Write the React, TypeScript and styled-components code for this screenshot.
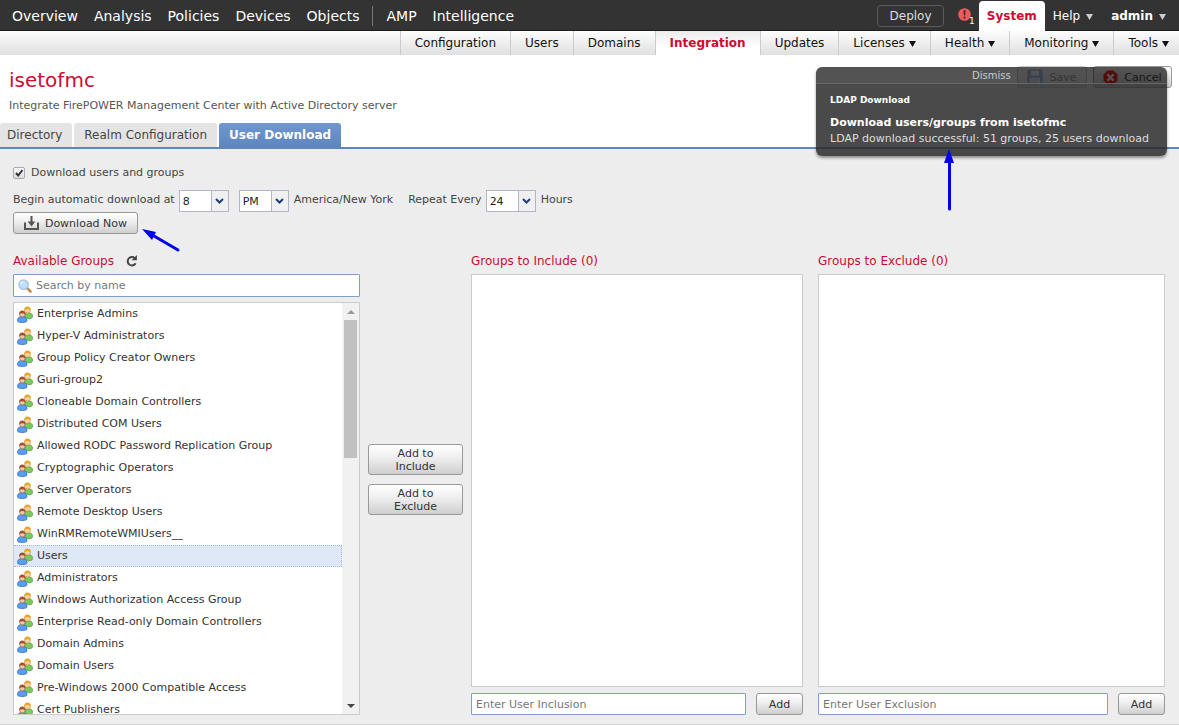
import React from 'react';
import styled, { createGlobalStyle, css } from 'styled-components';

const Global = createGlobalStyle`
  * { box-sizing: border-box; }
  body {
    margin: 0;
    background: #fff;
    color: #444;
    font: 11px/14px "DejaVu Sans", Verdana, sans-serif;
  }
  button, input, select { font: inherit; color: inherit; margin: 0; }
  h1, h2, h3, p, ul { margin: 0; padding: 0; font-weight: normal; }
  a { color: inherit; text-decoration: none; }
`;

const red = '#cc0c33';
const fieldBorder = '#7f9fc6';

const Page = styled.div`
  position: relative;
  display: flex;
  flex-direction: column;
`;

/* ---------- top bar ---------- */
const TopBar = styled.header`
  display: flex;
  justify-content: space-between;
  height: 31px;
  background: #333;
  border-bottom: 1px solid #1c1c1c;
  color: #fff;
`;
const MainNav = styled.nav`
  display: flex;
  align-items: center;
  gap: 16px;
  padding: 1px 0 0 12px;
  font-size: 14px;
  line-height: 20px;
`;
const NavDivider = styled.span`
  width: 1px;
  height: 20px;
  margin: 0 -3px;
  background: #777;
`;
const UserNav = styled.nav`
  display: flex;
  align-items: center;
  padding-right: 13px;
  font-size: 12px;
  line-height: 18px;
`;
const DeployButton = styled.button`
  width: 67px;
  height: 22px;
  margin-top: 1px;
  padding: 0;
  border: 1px solid #5c5c5c;
  border-radius: 4px;
  background: transparent;
  color: #ddd;
`;
const AlertLink = styled.a`
  display: flex;
  margin: 5px 4px 0 14px;
  color: #fff;
  font-size: 9px;
  line-height: 12px;
`;
const AlertCount = styled.span`
  padding-top: 7px;
  margin-left: -2px;
`;
const SystemTab = styled.a`
  align-self: flex-end;
  height: 30px;
  padding: 6px 8px;
  margin: 0 8px -1px 0;
  border-radius: 4px 4px 0 0;
  background: #fff;
  color: ${red};
  font-weight: bold;
`;
const MenuLink = styled.a<{ $bold?: boolean }>`
  display: flex;
  align-items: center;
  gap: 6px;
  padding-top: 1px;
  font-weight: ${(p) => (p.$bold ? 'bold' : 'normal')};
  svg { margin-top: 2px; }
  & + & { margin-left: 18px; }
`;

/* ---------- second bar ---------- */
const SubNav = styled.nav`
  display: flex;
  justify-content: flex-end;
  height: 24px;
  background: linear-gradient(#fdfdfd, #e0e0e0);
  color: #111;
  font-size: 12px;
  line-height: 24px;
`;
const SubLink = styled.a<{ $active?: boolean }>`
  display: flex;
  align-items: center;
  gap: 4px;
  padding: 0 14px;
  border-left: 1px solid #ccc;
  svg { margin-top: 2px; }
  &:last-child { padding-right: 10px; }
  ${(p) => p.$active && css`
    background: linear-gradient(#ececec, #fff 70%);
    color: ${red};
    font-weight: bold;
  `}
`;

/* ---------- page header ---------- */
const PageHeader = styled.div`
  display: flex;
  justify-content: space-between;
  padding: 11px 7px 0 9px;
`;
const Title = styled.h1`
  color: ${red};
  font-size: 20px;
  line-height: 28px;
`;
const Description = styled.p`
  padding-top: 5px;
  color: #555;
`;
const HeaderActions = styled.div`
  display: flex;
  align-items: flex-start;
  gap: 6px;
`;
const Button = styled.button<{ $width?: number }>`
  display: flex;
  align-items: center;
  justify-content: center;
  gap: 6px;
  width: ${(p) => (p.$width ? `${p.$width}px` : 'auto')};
  min-height: 22px;
  flex: none;
  padding: 0 8px;
  border: 1px solid #999;
  border-radius: 3px;
  background: linear-gradient(#fff, #f0f0f0 40%, #cfcfcf);
  color: #333;
  line-height: 13px;
  &:disabled { opacity: 0.5; }
`;

const Tabs = styled.nav`
  display: flex;
  gap: 2px;
  margin-top: 10px;
  border-bottom: 2px solid #5f86be;
  font-size: 12px;
  line-height: 24px;
`;
const Tab = styled.a<{ $active?: boolean }>`
  padding: 0 10px;
  border-radius: 3px 3px 0 0;
  background: #e4e4e4;
  color: #444;
  &:first-child { padding-left: 7px; }
  ${(p) => p.$active && css`
    background: linear-gradient(#6f97d0, #5f86be);
    color: #fff;
    font-weight: bold;
  `}
`;

/* ---------- form ---------- */
const Content = styled.main`
  padding: 15px 14px 9px 13px;
  background: #ededed;
  border-bottom: 1px solid #d5d5d5;
`;
const CheckLabel = styled.label`
  display: flex;
  align-items: center;
  gap: 6px;
  height: 18px;
`;
const CheckBox = styled.input`
  appearance: none;
  width: 12px;
  height: 12px;
  border: 1px solid #aaa;
  border-radius: 2px;
  background: linear-gradient(#fafafa, #ddd);
  & + svg { visibility: hidden; }
  &:checked + svg { visibility: visible; }
`;
const CheckWrap = styled.span`
  position: relative;
  display: flex;
  svg { position: absolute; inset: 0; pointer-events: none; }
`;
const ScheduleRow = styled.div`
  display: flex;
  align-items: flex-start;
  height: 22px;
  margin-top: 8px;
`;
const ScheduleLabel = styled.label`
  padding: 3px 0;
  white-space: nowrap;
`;
const RepeatLabel = styled(ScheduleLabel)`
  margin-left: 15px;
`;
const SelectWrap = styled.span<{ $before: number; $after: number }>`
  position: relative;
  display: flex;
  margin: 0 ${(p) => p.$after}px 0 ${(p) => p.$before}px;
`;
const Select = styled.select`
  appearance: none;
  width: 50px;
  height: 22px;
  padding: 2px 20px 0 3px;
  border: 1px solid #b0b6c8;
  border-radius: 0;
  background: #fff;
  color: #222;
`;
const SelectArrow = styled.span`
  position: absolute;
  top: 1px;
  right: 1px;
  display: flex;
  align-items: center;
  justify-content: center;
  width: 17px;
  height: 20px;
  border-left: 1px solid #b0b6c8;
  background: #f0f0f0;
  pointer-events: none;
`;

/* ---------- group columns ---------- */
const Columns = styled.div`
  display: grid;
  grid-template-columns: minmax(0, 347fr) 95px minmax(0, 332fr) minmax(0, 354fr);
  column-gap: 8px;
  margin-top: 19px;
`;
const Column = styled.section<{ $indent?: boolean }>`
  display: flex;
  flex-direction: column;
  margin-left: ${(p) => (p.$indent ? '7px' : '0')};
`;
const ColumnTitle = styled.h2`
  display: flex;
  align-items: center;
  gap: 12px;
  height: 16px;
  margin-bottom: 5px;
  color: ${red};
  font-size: 12px;
  line-height: 16px;
`;
const IconButton = styled.button`
  display: flex;
  padding: 0;
  border: 0;
  background: none;
`;
const SearchBox = styled.label`
  display: flex;
  align-items: center;
  gap: 4px;
  height: 23px;
  padding-left: 4px;
  border: 1px solid ${fieldBorder};
  border-radius: 1px;
  background: #fff;
`;
const SearchInput = styled.input`
  flex: 1;
  min-width: 0;
  padding: 0;
  border: 0;
  outline: 0;
  background: none;
  &::placeholder { color: #777; opacity: 1; }
`;
const ListFrame = styled.div`
  display: flex;
  height: 413px;
  margin-top: 5px;
  border: 1px solid #ccc;
  background: #fff;
`;
const GroupList = styled.ul`
  flex: 1;
  overflow: hidden;
  list-style: none;
`;
const GroupItem = styled.li<{ $selected?: boolean }>`
  display: flex;
  align-items: center;
  gap: 4px;
  height: 22px;
  padding-left: 3px;
  border: 1px dotted ${(p) => (p.$selected ? '#a3bae9' : 'transparent')};
  border-left: 0;
  background: ${(p) => (p.$selected ? '#dfe8f6' : 'transparent')};
  color: #333;
`;
const ScrollTrack = styled.div`
  display: flex;
  flex-direction: column;
  align-items: center;
  width: 17px;
  background: #f1f1f1;
`;
const ScrollArrow = styled.span`
  display: flex;
  align-items: center;
  justify-content: center;
  height: 17px;
`;
const ScrollThumb = styled.span`
  width: 13px;
  height: 138px;
  margin-bottom: auto;
  background: #c1c1c1;
`;
const Middle = styled.div`
  display: flex;
  flex-direction: column;
  justify-content: center;
  gap: 9px;
  padding-bottom: 9px;
`;
const MoveButton = styled(Button)`
  width: 100%;
  min-height: 31px;
  padding: 1px 20px 0;
`;
const EmptyBox = styled.div`
  flex: 1;
  border: 1px solid #ccc;
  background: #fff;
`;
const AddRow = styled.div`
  display: flex;
  gap: 10px;
  margin-top: 6px;
`;
const UserInput = styled.input`
  flex: 1;
  min-width: 0;
  height: 22px;
  padding: 0 4px;
  border: 1px solid ${fieldBorder};
  border-radius: 1px;
  background: #fff;
  &::placeholder { color: #777; opacity: 1; }
`;

/* ---------- notification ---------- */
const Toast = styled.aside`
  position: absolute;
  top: 67px;
  right: 12px;
  width: 351px;
  height: 89px;
  border-radius: 6px;
  background: linear-gradient(rgba(10, 10, 10, 0.7) 17px, rgba(42, 42, 42, 0.85) 17px);
  box-shadow: 0 2px 3px rgba(0, 0, 0, 0.4);
  color: #ddd;
`;
const ToastBar = styled.div`
  display: flex;
  height: 17px;
  padding: 2px 0 0 156px;
  border-bottom: 1px solid #666;
`;
const Dismiss = styled.button`
  padding: 0;
  border: 0;
  background: none;
  color: #ccc;
  font-size: 10px;
`;
const ToastBody = styled.div`
  padding: 8px 14px;
  line-height: 16px;
`;
const ToastTitle = styled.h3`
  margin-bottom: 7px;
  color: #fff;
  font-size: 9px;
  font-weight: bold;
`;
const ToastMessage = styled.p`
  white-space: nowrap;
  strong { display: block; color: #fff; }
`;

const Pointer = styled.svg<{ $top: number; $left: number }>`
  position: absolute;
  top: ${(p) => p.$top}px;
  left: ${(p) => p.$left}px;
  overflow: visible;
  pointer-events: none;
`;

/* ---------- icons ---------- */
const Caret = ({ color = '#111' }: { color?: string }) => (
  <svg width="7" height="6" viewBox="0 0 7 6" aria-hidden="true">
    <path d="M0 0h7L3.5 6z" fill={color} />
  </svg>
);
const AlertIcon = () => (
  <svg width="13" height="13" viewBox="0 0 13 13" aria-hidden="true">
    <circle cx="6.5" cy="6.5" r="6.3" fill="#f05a5a" />
    <path d="M5.4 2.3h2.2L7.2 7.6H5.8z" fill="#333" />
    <circle cx="6.5" cy="9.6" r="1.1" fill="#333" />
  </svg>
);
const SaveIcon = () => (
  <svg width="16" height="16" viewBox="0 0 16 16" aria-hidden="true">
    <path d="M1 2l1-1h12l1 1v13H1z" fill="#4d8fe0" stroke="#2b67b7" />
    <path d="M4 1.5h8v5H4z" fill="#fff" />
    <path d="M3 9h10v6H3z" fill="#eef4fb" />
    <path d="M4 11h8M4 13h8" stroke="#9b9" />
  </svg>
);
const CancelIcon = () => (
  <svg width="15" height="15" viewBox="0 0 15 15" aria-hidden="true">
    <path d="M4.5 .5h6l4 4v6l-4 4h-6l-4-4v-6z" fill="#ff1010" />
    <path d="M5 5l5 5M10 5l-5 5" stroke="#fff" strokeWidth="2.4" strokeLinecap="round" />
  </svg>
);
const DownloadIcon = () => (
  <svg width="15" height="15" viewBox="0 0 15 15" fill="none" stroke="#555" aria-hidden="true">
    <path d="M1 6.500V13h13V6.500" strokeWidth="2" />
    <path d="M7.500 0v6" strokeWidth="2" />
    <path d="M3.700 5.500h7.600L7.500 10.500z" fill="#555" stroke="none" />
  </svg>
);
const RefreshIcon = () => (
  <svg width="12" height="12" viewBox="0 0 12 12" fill="none" aria-hidden="true">
    <path d="M8.600 3A4.200 4.200 0 1 0 9.600 8.200" stroke="#444" strokeWidth="2" />
    <path d="M10.900 0v5.300H5.600z" fill="#444" />
  </svg>
);
const SearchIcon = () => (
  <svg width="14" height="14" viewBox="0 0 14 14" aria-hidden="true">
    <path d="M9.300 9.300l3.200 3.200" stroke="#c58a4a" strokeWidth="2.600" strokeLinecap="round" />
    <circle cx="5.600" cy="5.600" r="4.700" fill="#bfdff8" stroke="#a3c1e0" strokeWidth="1.300" />
    <path d="M2.800 5.200a2.800 2.800 0 0 1 2.500-2.400" stroke="#fff" fill="none" />
  </svg>
);
const GroupIcon = () => (
  <svg width="16" height="17" viewBox="0 0 16 17" aria-hidden="true">
    <path d="M7.500 11c0-3 1-4.300 3.200-4.300 3 0 4.800.800 4.800 3.800 0 1.500-1.500 2.200-4 2.200z" fill="#7cc95f" stroke="#4a9a3f" strokeWidth=".8" />
    <circle cx="10.500" cy="4.300" r="2.900" fill="#f6d3a4" stroke="#c98a2b" strokeWidth=".6" />
    <path d="M7.300 4.500C7 1.700 8.500.400 10.500.400s3.700 1.300 3.300 4.100c-1.600-1.800-4.700-1.800-6.500 0z" fill="#e2a52f" />
    <path d="M.5 14.800c0-3 1.600-4.200 4.500-4.200s5 1.200 5 4.200c0 1-1.500 1.700-4.700 1.700S.5 15.800.5 14.800z" fill="#5b9df0" stroke="#2f6fc8" strokeWidth=".8" />
    <circle cx="5.300" cy="8.200" r="2.700" fill="#f3c7a4" stroke="#a35d3a" strokeWidth=".6" />
    <path d="M2.200 8.400C2 5.800 3.500 4.600 5.300 4.600S8.600 5.800 8.400 8.400C6.700 6.700 4 6.700 2.200 8.400z" fill="#9a5230" />
  </svg>
);

/* ---------- data ---------- */
const groups = [
  'Enterprise Admins', 'Hyper-V Administrators', 'Group Policy Creator Owners', 'Guri-group2',
  'Cloneable Domain Controllers', 'Distributed COM Users', 'Allowed RODC Password Replication Group',
  'Cryptographic Operators', 'Server Operators', 'Remote Desktop Users', 'WinRMRemoteWMIUsers__',
  'Users', 'Administrators', 'Windows Authorization Access Group',
  'Enterprise Read-only Domain Controllers', 'Domain Admins', 'Domain Users',
  'Pre-Windows 2000 Compatible Access', 'Cert Publishers',
];
const subLinks = [
  { label: 'Configuration' }, { label: 'Users' }, { label: 'Domains' },
  { label: 'Integration', active: true }, { label: 'Updates' },
  { label: 'Licenses', menu: true }, { label: 'Health', menu: true },
  { label: 'Monitoring', menu: true }, { label: 'Tools', menu: true },
];

interface PickerProps { id?: string; label?: string; value: string; options: string[]; before: number; after: number }
const Picker = ({ id, label, value, options, before, after }: PickerProps) => (
  <SelectWrap $before={before} $after={after}>
    <Select id={id} aria-label={label} defaultValue={value}>
      {options.map((o) => <option key={o}>{o}</option>)}
    </Select>
    <SelectArrow>
      <svg width="9" height="6" viewBox="0 0 9 6" fill="none" aria-hidden="true">
        <path d="M1 1l3.500 3.500L8 1" stroke="#1d3f7c" strokeWidth="2" />
      </svg>
    </SelectArrow>
  </SelectWrap>
);

const UserColumn = ({ title, placeholder, indent }: { title: string; placeholder: string; indent?: boolean }) => (
  <Column $indent={indent}>
    <ColumnTitle>{title}</ColumnTitle>
    <EmptyBox />
    <AddRow>
      <UserInput type="text" placeholder={placeholder} aria-label={placeholder} />
      <Button type="button" $width={47}>Add</Button>
    </AddRow>
  </Column>
);

export default function App() {
  return (
    <Page>
      <Global />
      <TopBar>
        <MainNav>
          {['Overview', 'Analysis', 'Policies', 'Devices', 'Objects'].map((l) => <a href="#" key={l}>{l}</a>)}
          <NavDivider />
          <a href="#">AMP</a>
          <a href="#">Intelligence</a>
        </MainNav>
        <UserNav>
          <DeployButton type="button">Deploy</DeployButton>
          <AlertLink href="#" aria-label="1 alert"><AlertIcon /><AlertCount>1</AlertCount></AlertLink>
          <SystemTab href="#">System</SystemTab>
          <MenuLink href="#">Help <Caret color="#ccc" /></MenuLink>
          <MenuLink href="#" $bold>admin <Caret color="#ccc" /></MenuLink>
        </UserNav>
      </TopBar>
      <SubNav>
        {subLinks.map((l) => (
          <SubLink href="#" key={l.label} $active={l.active}>{l.label}{l.menu && <Caret />}</SubLink>
        ))}
      </SubNav>

      <PageHeader>
        <div>
          <Title>isetofmc</Title>
          <Description>Integrate FirePOWER Management Center with Active Directory server</Description>
        </div>
        <HeaderActions>
          <Button type="button" $width={70} disabled><SaveIcon />Save</Button>
          <Button type="button" $width={79}><CancelIcon />Cancel</Button>
        </HeaderActions>
      </PageHeader>
      <Tabs>
        <Tab href="#">Directory</Tab>
        <Tab href="#">Realm Configuration</Tab>
        <Tab href="#" $active>User Download</Tab>
      </Tabs>

      <Content>
        <CheckLabel>
          <CheckWrap>
            <CheckBox type="checkbox" defaultChecked />
            <svg width="12" height="12" viewBox="0 0 12 12" fill="none" aria-hidden="true">
              <path d="M3 6l2.200 2.500L9.500 3" stroke="#333" strokeWidth="2" />
            </svg>
          </CheckWrap>
          Download users and groups
        </CheckLabel>
        <ScheduleRow>
          <ScheduleLabel htmlFor="hour">Begin automatic download at</ScheduleLabel>
          <Picker id="hour" value="8" options={['7', '8', '9']} before={4} after={10} />
          <Picker label="AM or PM" value="PM" options={['AM', 'PM']} before={0} after={5} />
          <ScheduleLabel as="span">America/New York</ScheduleLabel>
          <RepeatLabel htmlFor="repeat">Repeat Every</RepeatLabel>
          <Picker id="repeat" value="24" options={['12', '24']} before={4} after={5} />
          <ScheduleLabel as="span">Hours</ScheduleLabel>
        </ScheduleRow>
        <Button type="button" $width={125}><DownloadIcon />Download Now</Button>

        <Columns>
          <Column>
            <ColumnTitle>
              Available Groups
              <IconButton type="button" aria-label="Refresh groups"><RefreshIcon /></IconButton>
            </ColumnTitle>
            <SearchBox>
              <SearchIcon />
              <SearchInput type="text" placeholder="Search by name" aria-label="Search by name" />
            </SearchBox>
            <ListFrame>
              <GroupList>
                {groups.map((g) => <GroupItem key={g} $selected={g === 'Users'}><GroupIcon />{g}</GroupItem>)}
              </GroupList>
              <ScrollTrack>
                <ScrollArrow><svg width="8" height="4" viewBox="0 0 8 4" aria-hidden="true"><path d="M0 4h8L4 0z" fill="#999" /></svg></ScrollArrow>
                <ScrollThumb />
                <ScrollArrow><svg width="8" height="4" viewBox="0 0 8 4" aria-hidden="true"><path d="M0 0h8L4 4z" fill="#444" /></svg></ScrollArrow>
              </ScrollTrack>
            </ListFrame>
          </Column>
          <Middle>
            <MoveButton type="button">Add to Include</MoveButton>
            <MoveButton type="button">Add to Exclude</MoveButton>
          </Middle>
          <UserColumn title="Groups to Include (0)" placeholder="Enter User Inclusion" />
          <UserColumn title="Groups to Exclude (0)" placeholder="Enter User Exclusion" indent />
        </Columns>
      </Content>

      <Toast role="status">
        <ToastBar><Dismiss type="button">Dismiss</Dismiss></ToastBar>
        <ToastBody>
          <ToastTitle>LDAP Download</ToastTitle>
          <ToastMessage>
            <strong>Download users/groups from isetofmc</strong>
            LDAP download successful: 51 groups, 25 users download
          </ToastMessage>
        </ToastBody>
      </Toast>

      <Pointer $top={229} $left={142} width="38" height="24" viewBox="0 0 38 24" aria-hidden="true">
        <path d="M36 21L12 7" stroke="#0000f0" strokeWidth="3" strokeLinecap="round" />
        <path d="M0 0l14 3-4 8z" fill="#0000f0" />
      </Pointer>
      <Pointer $top={149} $left={944} width="10" height="64" viewBox="0 0 10 64" aria-hidden="true">
        <path d="M5.500 12V60" stroke="#0000f0" strokeWidth="3" strokeLinecap="round" />
        <path d="M5 0l5 14H0z" fill="#0000f0" />
      </Pointer>
    </Page>
  );
}
